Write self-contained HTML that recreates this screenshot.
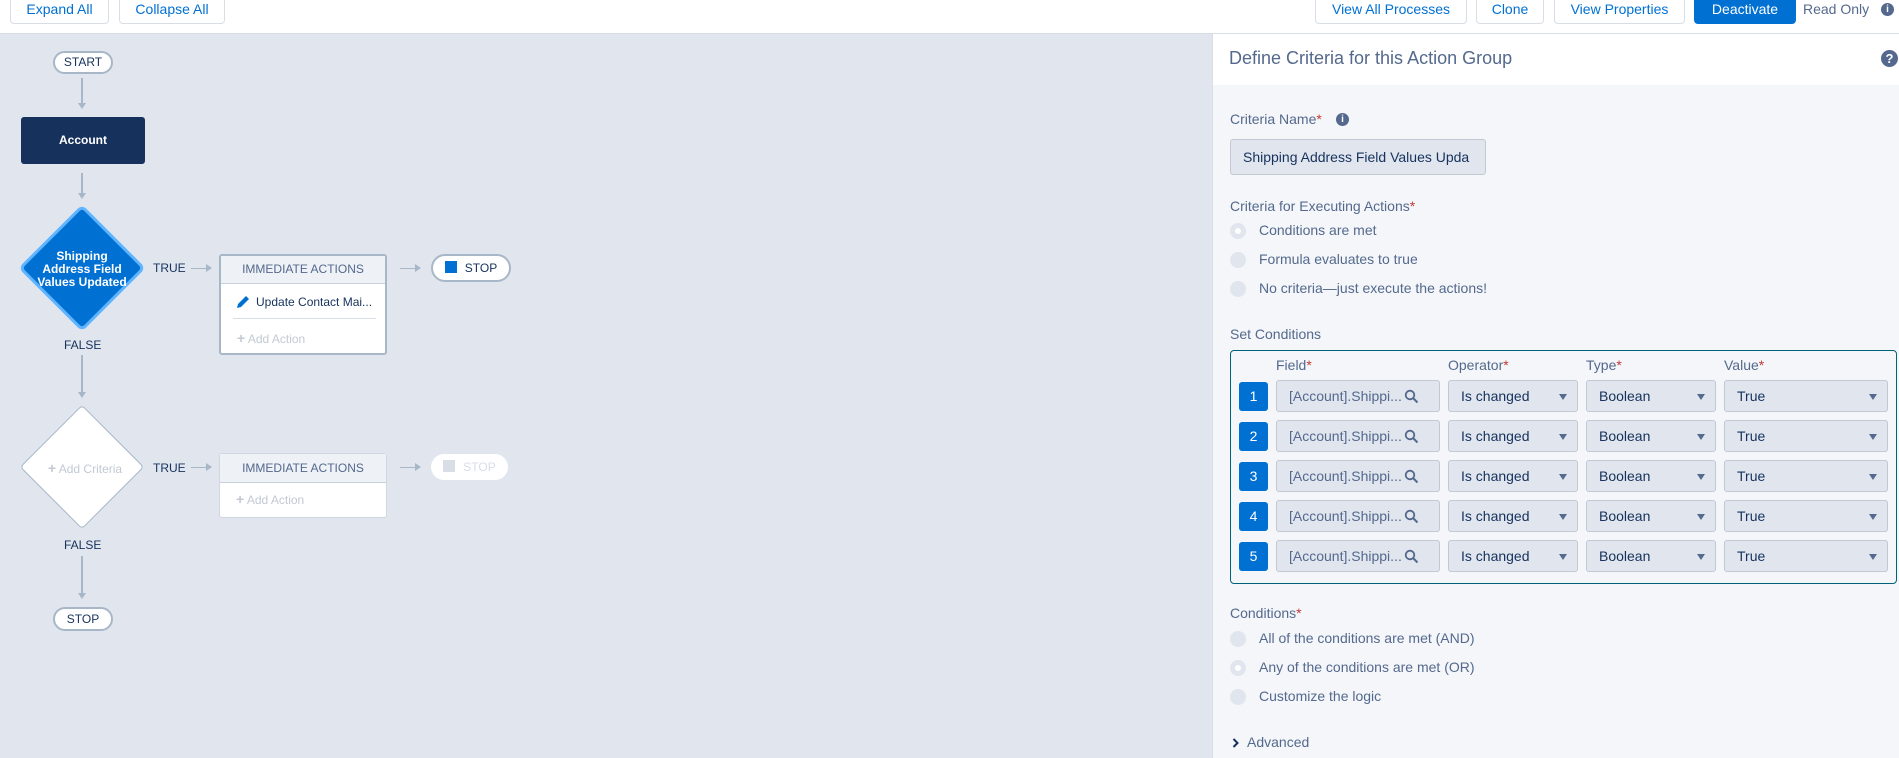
<!DOCTYPE html>
<html><head><meta charset="utf-8"><style>
*{box-sizing:border-box;margin:0;padding:0}
body{width:1899px;height:758px;overflow:hidden;font-family:"Liberation Sans",Arial,sans-serif;background:#fff;position:relative;color:#16325c}
.a{position:absolute}
.btn{position:absolute;top:-4px;height:28px;border:1px solid #d8dde6;border-radius:4px;background:#fff;color:#0070d2;font-size:14px;line-height:24px;text-align:center}
.canvas{position:absolute;left:0;top:34px;width:1212px;height:724px;background:#e0e5ee}
.vl{position:absolute;width:2px;background:#a8b7c7}
.hl{position:absolute;height:2px;background:#a8b7c7}
.ah{position:absolute;width:0;height:0;border-left:4px solid transparent;border-right:4px solid transparent;border-top:6px solid #a8b7c7}
.ar{position:absolute;width:0;height:0;border-top:4px solid transparent;border-bottom:4px solid transparent;border-left:6px solid #a8b7c7}
.pill{position:absolute;background:#fff;border:2px solid #a8b7c7;border-radius:14px;font-size:12px;text-align:center;color:#16325c}
.lbl{position:absolute;font-size:12px;color:#16325c}
.box{position:absolute;background:#fff;border:2px solid #a8b7c7;border-radius:3px}
.bh{background:#eef1f6;border-bottom:1px solid #c9d1dc;font-size:12px;text-align:center;color:#54698d;position:relative}
.panel{position:absolute;left:1212px;top:34px;width:687px;height:724px;background:#f4f6f9;border-left:1px solid #d8dde6}
.t{position:absolute;font-size:14px;color:#54698d}
.rad{position:absolute;width:16px;height:16px;border-radius:50%;background:#e0e5ee}
.rad.on::after{content:"";position:absolute;left:5px;top:5px;width:6px;height:6px;border-radius:50%;background:#fff}
.req{color:#c23934}
.num{position:absolute;left:1239px;width:29px;height:29px;background:#0070d2;color:#fff;border-radius:3px;font-size:14px;text-align:center;line-height:29px}
.inp{position:absolute;height:32px;background:#e0e5ee;border:1px solid #c2c9d3;border-radius:3px;font-size:14px;line-height:30px;padding-left:12px;color:#54698d;overflow:hidden;white-space:nowrap}
.inp svg{position:absolute;right:20px;top:8px}
.sel{color:#16325c}
.sel::after{content:"";position:absolute;right:10px;top:13px;border-left:4px solid transparent;border-right:4px solid transparent;border-top:6px solid #54698d}
</style></head><body>
<div class="btn" style="left:10px;width:99px">Expand All</div>
<div class="btn" style="left:119px;width:106px">Collapse All</div>
<div class="btn" style="left:1315px;width:152px">View All Processes</div>
<div class="btn" style="left:1476px;width:68px">Clone</div>
<div class="btn" style="left:1554px;width:131px">View Properties</div>
<div class="btn" style="left:1694px;width:102px;background:#0070d2;border-color:#0070d2;color:#fff">Deactivate</div>
<div class="a" style="left:1803px;top:1px;font-size:14px;color:#54698d">Read Only</div>
<div class="a" style="left:1881px;top:3px;width:13px;height:13px;border-radius:50%;background:#54698d;color:#fff;font-size:10px;font-weight:bold;text-align:center;line-height:13px">i</div>
<div class="a" style="left:0;top:33px;width:1899px;height:1px;background:#d8dde6"></div>

<div class="canvas"></div>
<div class="pill" style="left:53px;top:51px;width:60px;height:23px;line-height:19px">START</div>
<div class="vl" style="left:81px;top:78px;height:25px"></div><div class="ah" style="left:78px;top:103px"></div>
<div class="a" style="left:21px;top:117px;width:124px;height:47px;background:#16325c;border-radius:3px;color:#fff;font-size:12px;font-weight:bold;text-align:center;line-height:47px">Account</div>
<div class="vl" style="left:81px;top:173px;height:21px"></div><div class="ah" style="left:78px;top:193px"></div>
<div class="a" style="left:37px;top:223px;width:90px;height:90px;background:#0070d2;border:3px solid #5eb4ff;border-radius:6px;transform:rotate(45deg)"></div>
<div class="a" style="left:32px;top:250px;width:100px;text-align:center;color:#fff;font-size:12px;font-weight:bold;line-height:13px">Shipping<br>Address Field<br>Values Updated</div>
<div class="lbl" style="left:153px;top:261px">TRUE</div>
<div class="hl" style="left:191px;top:268px;height:1px;width:16px"></div><div class="ar" style="left:206px;top:264px"></div>
<div class="box" style="left:219px;top:254px;width:168px;height:101px">
<div class="bh" style="height:28px;line-height:27px">IMMEDIATE ACTIONS</div>
<svg class="a" style="left:14px;top:38px" width="16" height="16" viewBox="0 0 16 16"><path d="M2 14 L3 10 L11 2 L14 5 L6 13 Z" fill="#0070d2"/></svg>
<div class="a" style="left:35px;top:39px;font-size:12px;color:#16325c">Update Contact Mai...</div>
<div class="a" style="left:12px;top:62px;width:143px;height:1px;background:#d8dde6"></div>
<div class="a" style="left:16px;top:74px;font-size:12px;color:#c2c9d3"><b style="font-size:14px">+</b> Add Action</div>
</div>
<div class="hl" style="left:400px;top:268px;height:1px;width:16px"></div><div class="ar" style="left:415px;top:264px"></div>
<div class="pill" style="left:431px;top:254px;width:80px;height:28px;line-height:24px"><span style="display:inline-block;width:12px;height:12px;background:#0070d2;vertical-align:-1px;margin-right:8px"></span>STOP</div>
<div class="lbl" style="left:64px;top:338px">FALSE</div>
<div class="vl" style="left:81px;top:355px;height:37px"></div><div class="ah" style="left:78px;top:392px"></div>

<div class="a" style="left:38px;top:423px;width:88px;height:88px;background:#fff;border:1px solid #a8b7c7;border-radius:4px;transform:rotate(45deg)"></div>
<div class="a" style="left:40px;top:460px;width:90px;text-align:center;color:#c2c9d3;font-size:12px"><b style="font-size:14px">+</b> Add Criteria</div>
<div class="lbl" style="left:153px;top:461px">TRUE</div>
<div class="hl" style="left:191px;top:467px;height:1px;width:16px"></div><div class="ar" style="left:206px;top:463px"></div>
<div class="box" style="left:219px;top:453px;width:168px;height:65px;border:1px solid #d0d7e2">
<div class="bh" style="height:29px;line-height:28px">IMMEDIATE ACTIONS</div>
<div class="a" style="left:16px;top:37px;font-size:12px;color:#c2c9d3"><b style="font-size:14px">+</b> Add Action</div>
</div>
<div class="hl" style="left:400px;top:467px;height:1px;width:16px"></div><div class="ar" style="left:415px;top:463px"></div>
<div class="a" style="left:431px;top:454px;width:77px;height:26px;background:#fff;border-radius:13px;font-size:12px;color:#d8dde6;line-height:26px;text-align:center"><span style="display:inline-block;width:12px;height:12px;background:#d8dde6;vertical-align:-1px;margin-right:8px"></span>STOP</div>
<div class="lbl" style="left:64px;top:538px">FALSE</div>
<div class="vl" style="left:81px;top:556px;height:37px"></div><div class="ah" style="left:78px;top:593px"></div>
<div class="pill" style="left:53px;top:607px;width:60px;height:24px;line-height:20px">STOP</div>

<div class="panel"></div>
<div class="a" style="left:1213px;top:34px;width:686px;height:51px;background:#fff"></div>
<div class="a" style="left:1229px;top:48px;font-size:18px;color:#54698d">Define Criteria for this Action Group</div>
<div class="a" style="left:1881px;top:50px;width:17px;height:17px;border-radius:50%;background:#54698d;color:#fff;font-size:13px;font-weight:bold;text-align:center;line-height:17px">?</div>

<div class="t" style="left:1230px;top:111px">Criteria Name<span class="req">*</span></div>
<div class="a" style="left:1336px;top:113px;width:13px;height:13px;border-radius:50%;background:#54698d;color:#fff;font-size:10px;font-weight:bold;text-align:center;line-height:13px">i</div>
<div class="inp" style="left:1230px;top:139px;width:256px;height:36px;line-height:34px;color:#16325c;padding-right:14px">Shipping Address Field Values Upda</div>

<div class="t" style="left:1230px;top:198px">Criteria for Executing Actions<span class="req">*</span></div>
<div class="rad on" style="left:1230px;top:223px"></div><div class="t" style="left:1259px;top:222px">Conditions are met</div>
<div class="rad" style="left:1230px;top:252px"></div><div class="t" style="left:1259px;top:251px">Formula evaluates to true</div>
<div class="rad" style="left:1230px;top:281px"></div><div class="t" style="left:1259px;top:280px">No criteria—just execute the actions!</div>

<div class="t" style="left:1230px;top:326px">Set Conditions</div>
<div class="a" style="left:1230px;top:350px;width:667px;height:234px;border:1px solid #00627a;border-radius:4px"></div>
<div class="t" style="left:1276px;top:357px">Field<span class="req">*</span></div>
<div class="t" style="left:1448px;top:357px">Operator<span class="req">*</span></div>
<div class="t" style="left:1586px;top:357px">Type<span class="req">*</span></div>
<div class="t" style="left:1724px;top:357px">Value<span class="req">*</span></div>

<div class="num" style="top:382px">1</div>
<div class="inp" style="left:1276px;top:380px;width:164px">[Account].Shippi...<svg width="15" height="15" viewBox="0 0 15 15"><circle cx="6" cy="6" r="4.3" fill="none" stroke="#54698d" stroke-width="1.8"/><path d="M9 9 L13.5 13.5" stroke="#54698d" stroke-width="2"/></svg></div>
<div class="inp sel" style="left:1448px;top:380px;width:130px">Is changed</div>
<div class="inp sel" style="left:1586px;top:380px;width:130px">Boolean</div>
<div class="inp sel" style="left:1724px;top:380px;width:164px">True</div>

<div class="num" style="top:422px">2</div>
<div class="inp" style="left:1276px;top:420px;width:164px">[Account].Shippi...<svg width="15" height="15" viewBox="0 0 15 15"><circle cx="6" cy="6" r="4.3" fill="none" stroke="#54698d" stroke-width="1.8"/><path d="M9 9 L13.5 13.5" stroke="#54698d" stroke-width="2"/></svg></div>
<div class="inp sel" style="left:1448px;top:420px;width:130px">Is changed</div>
<div class="inp sel" style="left:1586px;top:420px;width:130px">Boolean</div>
<div class="inp sel" style="left:1724px;top:420px;width:164px">True</div>

<div class="num" style="top:462px">3</div>
<div class="inp" style="left:1276px;top:460px;width:164px">[Account].Shippi...<svg width="15" height="15" viewBox="0 0 15 15"><circle cx="6" cy="6" r="4.3" fill="none" stroke="#54698d" stroke-width="1.8"/><path d="M9 9 L13.5 13.5" stroke="#54698d" stroke-width="2"/></svg></div>
<div class="inp sel" style="left:1448px;top:460px;width:130px">Is changed</div>
<div class="inp sel" style="left:1586px;top:460px;width:130px">Boolean</div>
<div class="inp sel" style="left:1724px;top:460px;width:164px">True</div>

<div class="num" style="top:502px">4</div>
<div class="inp" style="left:1276px;top:500px;width:164px">[Account].Shippi...<svg width="15" height="15" viewBox="0 0 15 15"><circle cx="6" cy="6" r="4.3" fill="none" stroke="#54698d" stroke-width="1.8"/><path d="M9 9 L13.5 13.5" stroke="#54698d" stroke-width="2"/></svg></div>
<div class="inp sel" style="left:1448px;top:500px;width:130px">Is changed</div>
<div class="inp sel" style="left:1586px;top:500px;width:130px">Boolean</div>
<div class="inp sel" style="left:1724px;top:500px;width:164px">True</div>

<div class="num" style="top:542px">5</div>
<div class="inp" style="left:1276px;top:540px;width:164px">[Account].Shippi...<svg width="15" height="15" viewBox="0 0 15 15"><circle cx="6" cy="6" r="4.3" fill="none" stroke="#54698d" stroke-width="1.8"/><path d="M9 9 L13.5 13.5" stroke="#54698d" stroke-width="2"/></svg></div>
<div class="inp sel" style="left:1448px;top:540px;width:130px">Is changed</div>
<div class="inp sel" style="left:1586px;top:540px;width:130px">Boolean</div>
<div class="inp sel" style="left:1724px;top:540px;width:164px">True</div>

<div class="t" style="left:1230px;top:605px">Conditions<span class="req">*</span></div>
<div class="rad" style="left:1230px;top:631px"></div><div class="t" style="left:1259px;top:630px">All of the conditions are met (AND)</div>
<div class="rad on" style="left:1230px;top:660px"></div><div class="t" style="left:1259px;top:659px">Any of the conditions are met (OR)</div>
<div class="rad" style="left:1230px;top:689px"></div><div class="t" style="left:1259px;top:688px">Customize the logic</div>
<svg class="a" style="left:1232px;top:738px" width="8" height="10" viewBox="0 0 8 10"><path d="M1.5 1 L5.5 5 L1.5 9" fill="none" stroke="#16325c" stroke-width="2"/></svg>
<div class="t" style="left:1247px;top:734px">Advanced</div>
</body></html>
